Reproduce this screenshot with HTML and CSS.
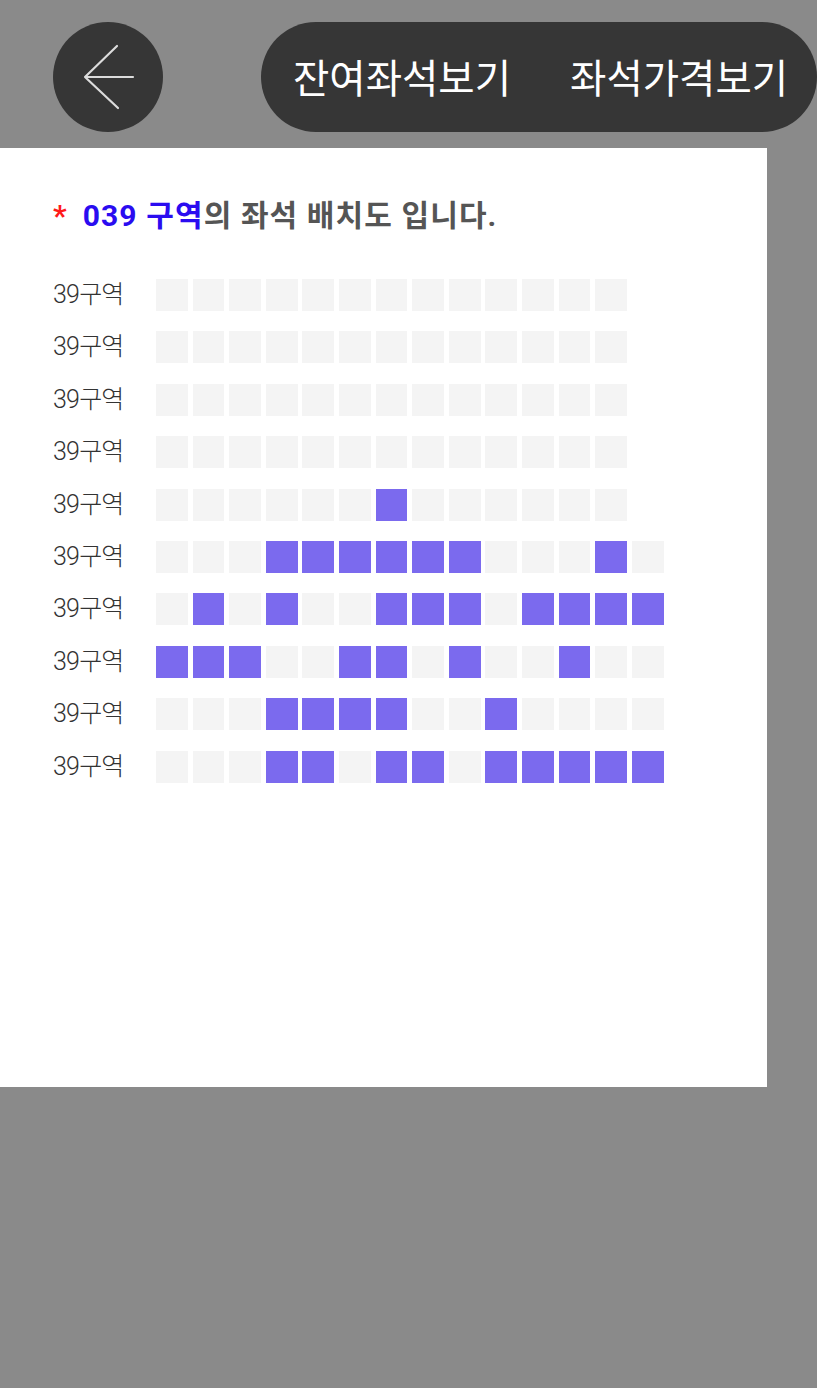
FILE: index.html
```html
<!DOCTYPE html>
<html lang="ko">
<head>
<meta charset="utf-8">
<link rel="stylesheet" href="styles.css">
</head>
<body>
<header class="top">
  <button class="back" aria-label="뒤로">
    <svg width="110" height="110" viewBox="0 0 110 110">
      <path d="M64 24 L32 55 L65 86 M32 55 L80 55" fill="none" stroke="#dcdcdc" stroke-width="2.2" stroke-linecap="round" stroke-linejoin="round"/>
    </svg>
  </button>
  <nav class="pill">
    <span>잔여좌석보기</span>
    <span>좌석가격보기</span>
  </nav>
</header>
<main class="panel">
  <h1 class="title"><span class="star">*</span><span class="zone">039 구역</span>의 좌석 배치도 입니다.</h1>
  <div class="rows" id="rows"></div>
</main>
<script>
const data = [
  "0000000000000",
  "0000000000000",
  "0000000000000",
  "0000000000000",
  "0000001000000",
  "00011111100010",
  "01010011101111",
  "11100110100100",
  "00011110010000",
  "00011011011111"
];
const rows = document.getElementById('rows');
data.forEach(r => {
  const row = document.createElement('div');
  row.className = 'row';
  const lab = document.createElement('span');
  lab.className = 'label';
  lab.textContent = '39구역';
  row.appendChild(lab);
  const seats = document.createElement('div');
  seats.className = 'seats';
  [...r].forEach(c => {
    const s = document.createElement('span');
    s.className = 'seat' + (c === '1' ? ' taken' : '');
    seats.appendChild(s);
  });
  row.appendChild(seats);
  rows.appendChild(row);
});
</script>
</body>
</html>
```
FILE: styles.css
```css
html, body {
  margin: 0;
  padding: 0;
}
body {
  background: #8a8a8a;
  width: 817px;
  height: 1388px;
  overflow: hidden;
  font-family: Roboto, "Noto Sans CJK KR", sans-serif;
}
.top {
  display: flex;
  align-items: center;
  padding: 22px 0 0 53px;
  height: 110px;
}
.back {
  width: 110px;
  height: 110px;
  border-radius: 50%;
  border: none;
  padding: 0;
  background: #363636;
  display: flex;
  flex: none;
}
.pill {
  margin-left: 98px;
  flex: none;
  width: 556px;
  height: 110px;
  border-radius: 55px;
  background: #363636;
  display: flex;
  align-items: center;
  padding: 0 0 4px 32px;
  box-sizing: border-box;
  gap: 59px;
  color: #ffffff;
  font-size: 39.5px;
  font-family: "Noto Sans CJK KR", sans-serif;
}
.panel {
  margin-top: 16px;
  width: 767px;
  height: 939px;
  background: #ffffff;
  box-sizing: border-box;
  padding: 46px 0 0 53px;
}
.title {
  margin: 0;
  font-size: 30px;
  font-weight: 700;
  color: #555555;
  line-height: 44px;
  letter-spacing: 1.1px;
}
.star {
  color: #ff1a1a;
  margin-right: 15px;
}
.zone {
  color: #2a0cf0;
}
.rows {
  margin-top: 41px;
  display: flex;
  flex-direction: column;
  gap: 20.4px;
}
.row {
  display: flex;
  align-items: center;
  height: 32px;
}
.label {
  width: 103px;
  font-size: 25px;
  font-weight: 300;
  color: #333333;
  letter-spacing: -0.8px;
  line-height: 32px;
}
.seats {
  display: flex;
  gap: 4.8px;
}
.seat {
  width: 31.8px;
  height: 32px;
  background: #f4f4f4;
}
.seat.taken {
  background: #7b6aee;
}
```
